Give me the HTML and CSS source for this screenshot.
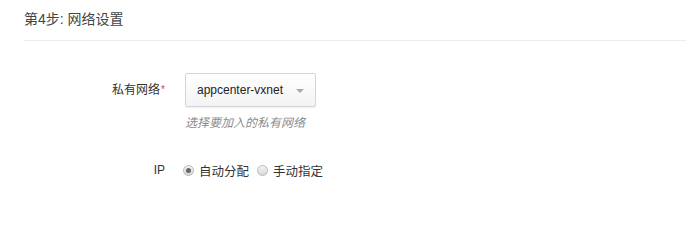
FILE: index.html
```html
<!DOCTYPE html>
<html>
<head>
<meta charset="utf-8">
<link rel="stylesheet" href="styles.css">
</head>
<body>
<div class="step">
  <div class="step-title">第4步: 网络设置</div>
  <div class="form">
    <div class="row">
      <div class="label">私有网络<span class="req">*</span></div>
      <div class="field">
        <div class="select">
          <span class="select-text">appcenter-vxnet</span>
          <span class="caret"></span>
        </div>
        <div class="hint">选择要加入的私有网络</div>
      </div>
    </div>
    <div class="row row-ip">
      <div class="label">IP</div>
      <div class="field radios">
        <label class="radio"><span class="dot checked"></span><span>自动分配</span></label>
        <label class="radio"><span class="dot"></span><span>手动指定</span></label>
      </div>
    </div>
  </div>
</div>
</body>
</html>
```
FILE: styles.css
```css
html, body {
  margin: 0;
  padding: 0;
  background: #fff;
}
body {
  font-family: "Liberation Sans", Arial, "Noto Sans CJK SC", sans-serif;
  font-size: 12px;
  color: #333;
}
.step {
  padding-left: 24px;
}
.step-title {
  font-size: 14px;
  line-height: 18px;
  color: #444;
  padding: 10px 0 12px 0;
  border-bottom: 1px solid #ececec;
}
.form {
  padding-top: 32px;
}
.row {
  display: grid;
  grid-template-columns: 141px auto;
  column-gap: 20px;
}
.label {
  text-align: right;
  line-height: 34px;
  height: 34px;
  color: #333;
}
.req {
  color: #d9443a;
  font-size: 10px;
  vertical-align: 1px;
  margin-left: 1px;
}
.select {
  box-sizing: border-box;
  width: 131px;
  height: 34px;
  border: 1px solid #d3d3d8;
  border-radius: 2px;
  background: linear-gradient(#ffffff, #f3f3f3);
  box-shadow: 0 1px 1px rgba(0,0,0,0.06);
  display: flex;
  align-items: center;
  padding-left: 11px;
  color: #222;
}
.select-text {
  flex: 1;
  font-size: 12px;
}
.caret {
  width: 0;
  height: 0;
  border-left: 4px solid transparent;
  border-right: 4px solid transparent;
  border-top: 4px solid #a9a9a9;
  margin-right: 11px;
  margin-top: 1px;
}
.hint {
  margin-top: 7px;
  line-height: 18px;
  font-style: italic;
  color: #8c8c8c;
}
.row-ip {
  margin-top: 28px;
}
.row-ip .label {
  height: 20px;
  line-height: 20px;
}
.radios {
  display: flex;
  align-items: center;
  height: 20px;
  margin-left: -2px;
}
.radio {
  display: flex;
  align-items: center;
  margin-right: 8px;
  color: #333;
  font-size: 12.5px;
}
.dot {
  box-sizing: border-box;
  width: 11px;
  height: 11px;
  border-radius: 50%;
  border: 1px solid #b8b8b8;
  background: linear-gradient(#f4f4f4, #d8d8d8);
  margin-right: 5px;
  position: relative;
}
.dot.checked::after {
  content: "";
  position: absolute;
  left: 2px;
  top: 2px;
  width: 5px;
  height: 5px;
  border-radius: 50%;
  background: #666;
}
```
